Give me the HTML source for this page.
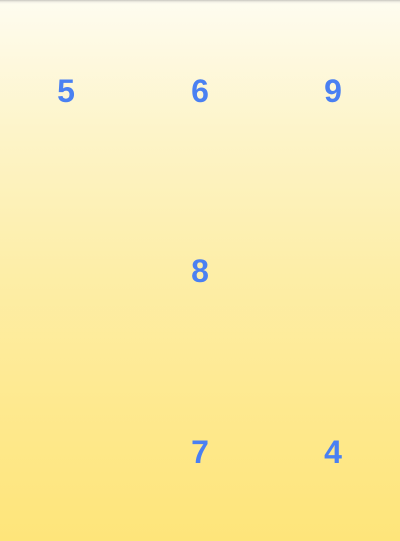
<!DOCTYPE html>
<html><head><meta charset="utf-8"><style>
html,body{margin:0;padding:0}
body{width:400px;height:541px;overflow:hidden;position:relative;background:linear-gradient(to bottom,#fefcf0 0%,#fdf4c8 25%,#fdeea8 50%,#fee98f 75%,#fee57a 100%);font-family:"Liberation Sans",sans-serif}
.top{position:absolute;left:0;top:0;width:400px;height:4px;background:linear-gradient(to bottom,#c8c6c0,rgba(230,228,220,0.5),rgba(255,255,255,0))}
.d{position:absolute;width:60px;text-align:center;font-weight:bold;font-size:32px;line-height:32px;color:#4a80f2}
</style></head><body>
<div class="top"></div>
<div class="d" style="left:36px;top:75px">5</div>
<div class="d" style="left:170px;top:75px">6</div>
<div class="d" style="left:303px;top:75px">9</div>
<div class="d" style="left:170px;top:255px">8</div>
<div class="d" style="left:170px;top:436px">7</div>
<div class="d" style="left:303px;top:436px">4</div>
</body></html>
